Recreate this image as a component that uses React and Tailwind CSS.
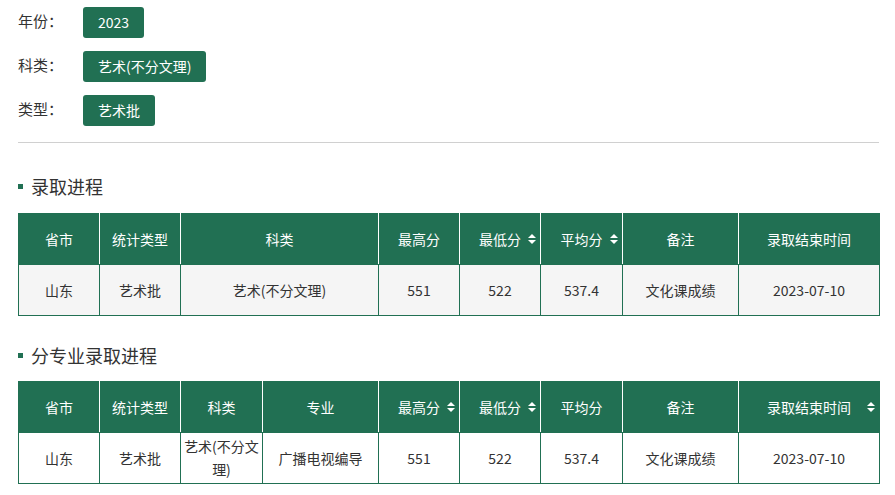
import React from "react";

function SortIcon() {
  return (
    <svg width="8" height="11" viewBox="0 0 8 11" className="absolute right-[4px] top-1/2 -translate-y-1/2" fill="white">
      <polygon points="0,4.5 4,0.5 8,4.5" />
      <polygon points="0,6.5 4,10.5 8,6.5" />
    </svg>
  );
}

function DataTable({ cols, row, bg }) {
  return (
    <table className="w-full table-fixed border-collapse text-[14px]">
      <colgroup>
        {cols.map((c, i) => (
          <col key={i} style={{ width: c.w }} />
        ))}
      </colgroup>
      <thead>
        <tr className="h-[51px]">
          {cols.map((c, i) => (
            <th
              key={i}
              className={
                "relative font-normal text-white bg-[#217053] border border-[#217053] px-[3px] leading-[22px] " +
                (i < cols.length - 1 ? "border-r-white" : "")
              }
            >
              {c.t}
              {c.s && <SortIcon />}
            </th>
          ))}
        </tr>
      </thead>
      <tbody>
        <tr className={"h-[51px] " + bg}>
          {row.map((v, i) => (
            <td key={i} className="border border-[#217053] text-center text-[#333] px-[3px] leading-[23px]">
              {v}
            </td>
          ))}
        </tr>
      </tbody>
    </table>
  );
}

function FilterRow({ label, value }) {
  return (
    <div className="flex items-center h-[31px]">
      <div className="w-[65px] text-[15px] text-[#333] leading-[20px] -mt-[4px]">{label}</div>
      <div className="h-[31px] px-[15px] flex items-center rounded-[3px] bg-[#217053] text-white text-[14px]">
        {value}
      </div>
    </div>
  );
}

function Heading({ children }) {
  return (
    <div className="flex items-center h-[24px]">
      <div className="w-[5px] h-[5px] bg-[#217053] mr-[8px]" />
      <div className="text-[18px] text-[#333] leading-[24px]">{children}</div>
    </div>
  );
}

export default function App() {
  const t1cols = [
    { t: "省市", w: 81 },
    { t: "统计类型", w: 81 },
    { t: "科类", w: 198 },
    { t: "最高分", w: 81 },
    { t: "最低分", w: 81, s: true },
    { t: "平均分", w: 82, s: true },
    { t: "备注", w: 116 },
    { t: "录取结束时间", w: 141 },
  ];
  const t1row = ["山东", "艺术批", "艺术(不分文理)", "551", "522", "537.4", "文化课成绩", "2023-07-10"];
  const t2cols = [
    { t: "省市", w: 81 },
    { t: "统计类型", w: 81 },
    { t: "科类", w: 82 },
    { t: "专业", w: 116 },
    { t: "最高分", w: 81, s: true },
    { t: "最低分", w: 81, s: true },
    { t: "平均分", w: 82 },
    { t: "备注", w: 116 },
    { t: "录取结束时间", w: 141, s: true },
  ];
  const t2row = ["山东", "艺术批", "艺术(不分文理)", "广播电视编导", "551", "522", "537.4", "文化课成绩", "2023-07-10"];

  return (
    <div
      className="w-[895px] h-[495px] bg-white pl-[18px] pr-[16px] pt-[7px] overflow-hidden"
      style={{ fontFamily: '"Noto Sans CJK SC", "Noto Sans", sans-serif' }}
    >
      <div className="flex flex-col gap-[13px]">
        <FilterRow label="年份：" value="2023" />
        <FilterRow label="科类：" value="艺术(不分文理)" />
        <FilterRow label="类型：" value="艺术批" />
      </div>
      <div className="mt-[16px] border-t border-[#d0d0d0]" />
      <div className="mt-[31px]">
        <Heading>录取进程</Heading>
      </div>
      <div className="mt-[15px]">
        <DataTable cols={t1cols} row={t1row} bg="bg-[#f5f5f5]" />
      </div>
      <div className="mt-[27px]">
        <Heading>分专业录取进程</Heading>
      </div>
      <div className="mt-[14px]">
        <DataTable cols={t2cols} row={t2row} bg="bg-white" />
      </div>
    </div>
  );
}
